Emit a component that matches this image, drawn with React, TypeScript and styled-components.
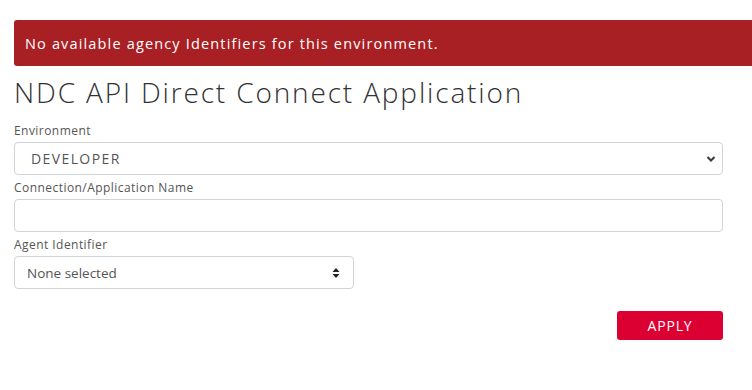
import React from "react";
import styled, { createGlobalStyle } from "styled-components";

const Global = createGlobalStyle`
  html, body { margin: 0; padding: 0; background: #fff; }
  body { font-family: "Open Sans", "Liberation Sans", sans-serif; color: #333; }
  * { box-sizing: border-box; }
`;

const Page = styled.div`
  width: 752px;
  height: 390px;
  overflow: hidden;
  padding: 20px 0 0 14px;
`;

const Alert = styled.div`
  height: 46px;
  margin-right: -10px;
  background: #a81f24;
  border-radius: 3px;
  color: #fff;
  font-size: 14.5px;
  letter-spacing: 1.16px;
  display: flex;
  align-items: center;
  padding-left: 11px;
`;

const Form = styled.div`
  margin-right: 29px;
  display: flex;
  flex-direction: column;
`;

const Title = styled.h1`
  margin: 8px 0 13px;
  font-weight: 300;
  font-size: 28px;
  line-height: 36px;
  letter-spacing: 1.85px;
  color: #333;
`;

const Label = styled.label`
  display: block;
  font-size: 12px;
  line-height: 16px;
  letter-spacing: 0.45px;
  color: #555;
  margin-bottom: 3px;
`;

const Field = styled.div<{ $width?: number }>`
  display: flex;
  flex-direction: column;
  margin-bottom: 5px;
  width: ${(p) => (p.$width ? `${p.$width}px` : "auto")};
`;

const Box = styled.div<{ $left?: number; $right?: number }>`
  height: 33px;
  border: 1px solid #ced4da;
  border-radius: 4px;
  display: flex;
  align-items: center;
  justify-content: space-between;
  padding: 0 ${(p) => p.$right ?? 12}px 0 ${(p) => p.$left ?? 12}px;
  font-size: 13.5px;
  color: #555;
`;

const Caps = styled.span`
  font-size: 14px;
  letter-spacing: 1.4px;
`;

const Footer = styled.div`
  display: flex;
  justify-content: flex-end;
  margin-top: 17px;
`;

const Button = styled.button`
  width: 106px;
  height: 29px;
  border: none;
  border-radius: 3px;
  background: #dc0032;
  color: #fff;
  font-family: inherit;
  font-size: 14px;
  letter-spacing: 0.8px;
  font-weight: 500;
`;

const Chevron = () => (
  <svg width="10" height="8" viewBox="0 0 10 8">
    <path d="M1.5 2 L5 5.5 L8.5 2" fill="none" stroke="#343a40" strokeWidth="2" />
  </svg>
);

const Sort = () => (
  <svg width="8" height="12" viewBox="0 0 8 12">
    <path d="M4 1 L7.5 5 H0.5 Z M4 11 L7.5 7 H0.5 Z" fill="#222" />
  </svg>
);

export default function App() {
  return (
    <Page>
      <Global />
      <Alert>No available agency Identifiers for this environment.</Alert>
      <Form>
        <Title>NDC API Direct Connect Application</Title>
        <Field>
          <Label>Environment</Label>
          <Box $left={16} $right={6}>
            <Caps>DEVELOPER</Caps>
            <Chevron />
          </Box>
        </Field>
        <Field>
          <Label>Connection/Application Name</Label>
          <Box />
        </Field>
        <Field $width={340}>
          <Label>Agent Identifier</Label>
          <Box $right={13}>
            <span>None selected</span>
            <Sort />
          </Box>
        </Field>
        <Footer>
          <Button>APPLY</Button>
        </Footer>
      </Form>
    </Page>
  );
}
